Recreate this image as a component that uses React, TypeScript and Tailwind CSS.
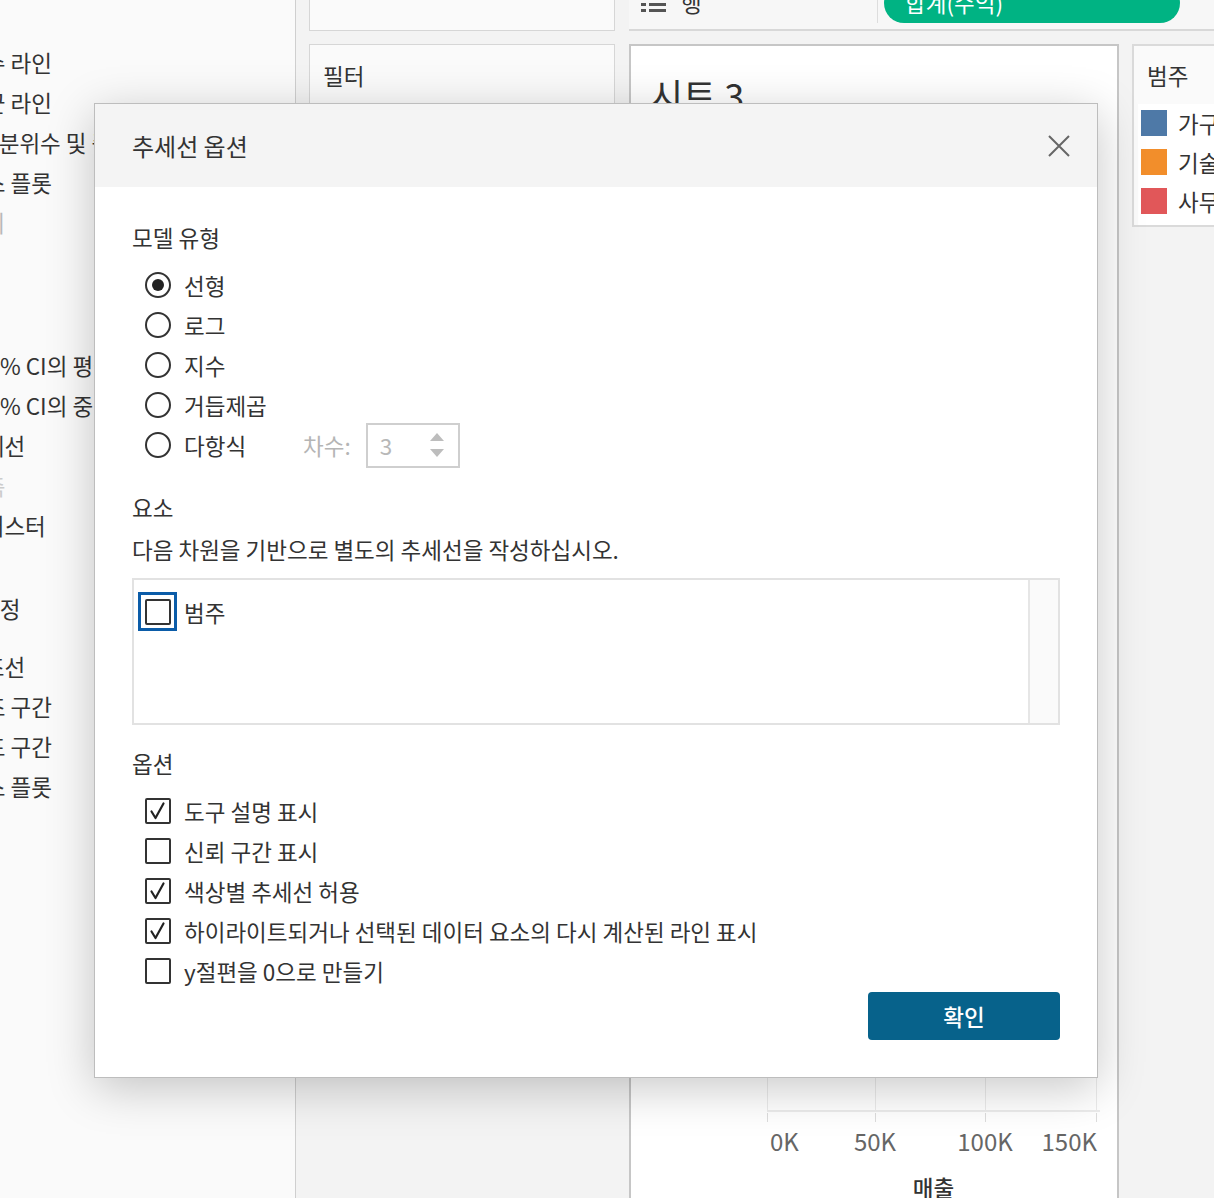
import React from "react";

// analytics pane, scrolled so only the right part of each label shows
const paneSections = [
  {
    title: "요약",
    titleBox: "h-[42px]",
    items: [
      { label: "상수 라인", cls: "-ml-[36px]" },
      { label: "평균 라인", cls: "-ml-[36px]" },
      { label: "사분위수 및 중앙값", cls: "-ml-[22px]" },
      { label: "박스 플롯", cls: "-ml-[36px]" },
      { label: "합계", cls: "-ml-[37px] text-[#b8b8b8]" },
    ],
  },
  {
    title: "모델",
    titleBox: "h-[103px] pt-[48px]",
    items: [
      { label: "95% CI의 평균", cls: "-ml-[25px]" },
      { label: "95% CI의 중앙값", cls: "-ml-[25px]" },
      { label: "추세선", cls: "-ml-[37px]" },
      { label: "예측", cls: "-ml-[36px] text-[#cccccc]" },
      { label: "클러스터", cls: "-ml-[37px]" },
    ],
  },
  {
    title: "사용자 지정",
    titleBox: "h-[101px] pt-[48px]",
    items: [
      { label: "참조선", cls: "-ml-[37px]" },
      { label: "참조 구간", cls: "-ml-[36px]" },
      { label: "분포 구간", cls: "-ml-[36px]" },
      { label: "박스 플롯", cls: "-ml-[36px]" },
    ],
  },
];

const models = [
  { label: "선형", on: true },
  { label: "로그" },
  { label: "지수" },
  { label: "거듭제곱" },
];

const options = [
  { label: "도구 설명 표시", checked: true },
  { label: "신뢰 구간 표시" },
  { label: "색상별 추세선 허용", checked: true },
  { label: "하이라이트되거나 선택된 데이터 요소의 다시 계산된 라인 표시", checked: true },
  { label: "y절편을 0으로 만들기" },
];

const legend = [
  { label: "가구", color: "bg-[#4e79a7]" },
  { label: "기술", color: "bg-[#f28e2b]" },
  { label: "사무", color: "bg-[#e15759]" },
];

function CheckBox({ checked }: { checked?: boolean }) {
  return (
    <span className="w-[26px] h-[26px] shrink-0 border-2 border-[#333] rounded-[2px] bg-white flex items-center justify-center">
      {checked && (
        <svg width="22" height="22" viewBox="0 0 22 22">
          <path
            d="M4.5 11.5 L8.5 18 L16.5 3.5"
            fill="none"
            stroke="#222"
            strokeWidth="2.2"
            strokeLinecap="round"
            strokeLinejoin="round"
          />
        </svg>
      )}
    </span>
  );
}

function Radio({ on }: { on?: boolean }) {
  return (
    <span className="w-[26px] h-[26px] shrink-0 rounded-full border-2 border-[#333] bg-white flex items-center justify-center">
      {on && <span className="w-[12px] h-[12px] rounded-full bg-[#222]" />}
    </span>
  );
}

function TrendDialog() {
  return (
    <div className="absolute left-[94px] top-[103px] w-[1004px] flex flex-col bg-white border border-[#bdbdbd] shadow-[0_10px_44px_rgba(0,0,0,0.22)] text-[#333]">
      <div className="h-[83px] bg-[#f4f4f4] flex items-center justify-between pl-[37px] pr-[27px]">
        <span className="text-[24px] leading-[30px]">추세선 옵션</span>
        <svg width="22" height="22" viewBox="0 0 22 22">
          <path d="M1 1 L21 21 M21 1 L1 21" stroke="#666" strokeWidth="2" fill="none" />
        </svg>
      </div>

      <div className="flex flex-col px-[37px] pb-[37px] text-[22.5px] leading-[30px]">
        <div className="mt-[35px]">모델 유형</div>
        <div className="mt-[13px] ml-[13px] flex flex-col">
          {models.map((m) => (
            <label key={m.label} className="h-[40px] flex items-center gap-[13px]">
              <Radio on={m.on} />
              <span>{m.label}</span>
            </label>
          ))}
          <div className="h-[40px] flex items-center">
            <Radio />
            <span className="ml-[13px]">다항식</span>
            <span className="ml-[57px] text-[#b5b5b5]">차수:</span>
            <div className="ml-[15px] w-[94px] h-[45px] shrink-0 border-2 border-[#cfcfcf] flex items-center justify-between pl-[12px] pr-[13px]">
              <span className="text-[#b8b8b8]">3</span>
              <svg width="16" height="30" viewBox="0 0 16 30">
                <path d="M1 11 L8 3 L15 11 Z" fill="#bdbdbd" />
                <path d="M1 19 L15 19 L8 27 Z" fill="#bdbdbd" />
              </svg>
            </div>
          </div>
        </div>

        <div className="mt-[27px]">요소</div>
        <div className="mt-[12px]">다음 차원을 기반으로 별도의 추세선을 작성하십시오.</div>
        <div className="mt-[14px] h-[147px] border-2 border-[#e2e2e2] flex">
          <div className="flex-1 pl-[4px] pt-[12px]">
            <div className="flex items-center gap-[7px]">
              <span className="w-[39px] h-[39px] border-[3px] border-[#0b5ca8] flex items-center justify-center">
                <CheckBox />
              </span>
              <span>범주</span>
            </div>
          </div>
          <div className="w-[30px] bg-[#fafafa] border-l-2 border-[#e6e6e6]" />
        </div>

        <div className="mt-[23px]">옵션</div>
        <div className="mt-[13px] ml-[13px] flex flex-col">
          {options.map((o) => (
            <label key={o.label} className="h-[40px] flex items-center gap-[13px]">
              <CheckBox checked={o.checked} />
              <span>{o.label}</span>
            </label>
          ))}
        </div>

        <button className="mt-[1px] self-end w-[192px] h-[48px] rounded-[4px] bg-[#07628b] text-white text-[22.5px] font-medium">
          확인
        </button>
      </div>
    </div>
  );
}

export default function App() {
  return (
    <div className="relative w-[1214px] h-[1198px] overflow-hidden flex bg-[#f3f3f3] font-['Noto_Sans_CJK_KR',sans-serif] text-[#333]">
      {/* analytics pane */}
      <div className="w-[296px] shrink-0 bg-[#fafafa] border-r border-[#cfcfcf] overflow-hidden text-[22.5px] leading-[30px]">
        {paneSections.map((s) => (
          <div key={s.title}>
            <div className={s.titleBox}>
              <div className="-ml-[88px] whitespace-nowrap">{s.title}</div>
            </div>
            {s.items.map((it) => (
              <div key={it.label} className="h-[40px] flex items-center">
                <span className={`whitespace-nowrap ${it.cls}`}>{it.label}</span>
              </div>
            ))}
          </div>
        ))}
      </div>

      {/* shelves column */}
      <div className="w-[333px] shrink-0 pl-[13px] pr-[14px] flex flex-col">
        <div className="h-[31px] bg-[#fafafa] border-x border-b border-[#d6d6d6]" />
        <div className="mt-[13px] h-[230px] bg-[#fafafa] border border-[#d6d6d6] pl-[13px] pt-[15px] text-[22.5px] leading-[30px]">
          필터
        </div>
      </div>

      {/* view */}
      <div className="flex-1 flex flex-col">
        <div className="-mt-[17px] h-[48px] shrink-0 flex items-start bg-[#f7f7f7] border-b-2 border-[#d8d8d8]">
          <div className="w-[249px] h-[40px] flex items-center pl-[12px] gap-[15px] border-r border-[#dddddd] text-[22.5px]">
            <svg width="25" height="18" viewBox="0 0 25 18" className="mt-[4px]">
              <rect x="0" y="1" width="5" height="3" fill="#555" />
              <rect x="8" y="1" width="17" height="3" fill="#555" />
              <rect x="0" y="7" width="5" height="3" fill="#555" />
              <rect x="8" y="7" width="17" height="3" fill="#555" />
              <rect x="0" y="13" width="5" height="3" fill="#555" />
              <rect x="8" y="13" width="17" height="3" fill="#555" />
            </svg>
            <span>행</span>
          </div>
          <div className="ml-[6px] w-[296px] h-[40px] rounded-full bg-[#00b383] text-white text-[22.5px] flex items-center pl-[21px]">
            합계(수익)
          </div>
        </div>

        <div className="mt-[13px] flex">
          {/* sheet */}
          <div className="w-[490px] h-[1176px] shrink-0 bg-white border-2 border-[#c6c6c6] flex flex-col">
            <div className="pt-[25px] pl-[19px] text-[36px] leading-[46px]">시트 3</div>
            <div className="flex-1 pl-[136px] flex">
              <div className="grid grid-cols-[108px_110px_112px] h-full">
                <div className="border-l border-[#ebebeb]" />
                <div className="border-l border-[#ebebeb]" />
                <div className="border-x border-[#ebebeb]" />
              </div>
            </div>
            <div className="h-[108px] shrink-0 pl-[136px]">
              <div className="w-[333px] border-t-2 border-[#ececec]">
                <div className="mt-[1px] grid grid-cols-[108px_110px_112px] h-[9px]">
                  <div className="border-l border-[#dddddd]" />
                  <div className="border-l border-[#dddddd]" />
                  <div className="border-x border-[#dddddd]" />
                </div>
                <div className="mt-[2px] flex text-[24px] leading-[34px] text-[#666]">
                  <span className="w-[68px] pl-[3px]">0K</span>
                  <span className="w-[80px] text-center">50K</span>
                  <span className="w-[30px]" />
                  <span className="w-[80px] text-center">100K</span>
                  <span className="w-[72px] text-right">150K</span>
                </div>
                <div className="mt-[12px] text-center text-[22.5px] leading-[34px] font-medium">매출</div>
              </div>
            </div>
          </div>

          {/* legend */}
          <div className="pl-[13px]">
            <div className="w-[100px] h-[183px] bg-[#fafafa] border-2 border-[#dadada] flex flex-col text-[22.5px] leading-[30px]">
              <div className="h-[58px] pl-[13px] pt-[14px]">범주</div>
              <div className="flex-1 bg-white ml-[4px] pl-[3px] pt-[6px] flex flex-col gap-[13px]">
                {legend.map((l) => (
                  <div key={l.label} className="flex items-center gap-[11px] h-[26px]">
                    <span className={`w-[26px] h-[26px] shrink-0 ${l.color}`} />
                    <span className="whitespace-nowrap">{l.label}</span>
                  </div>
                ))}
              </div>
            </div>
          </div>
        </div>
      </div>

      <TrendDialog />
    </div>
  );
}
